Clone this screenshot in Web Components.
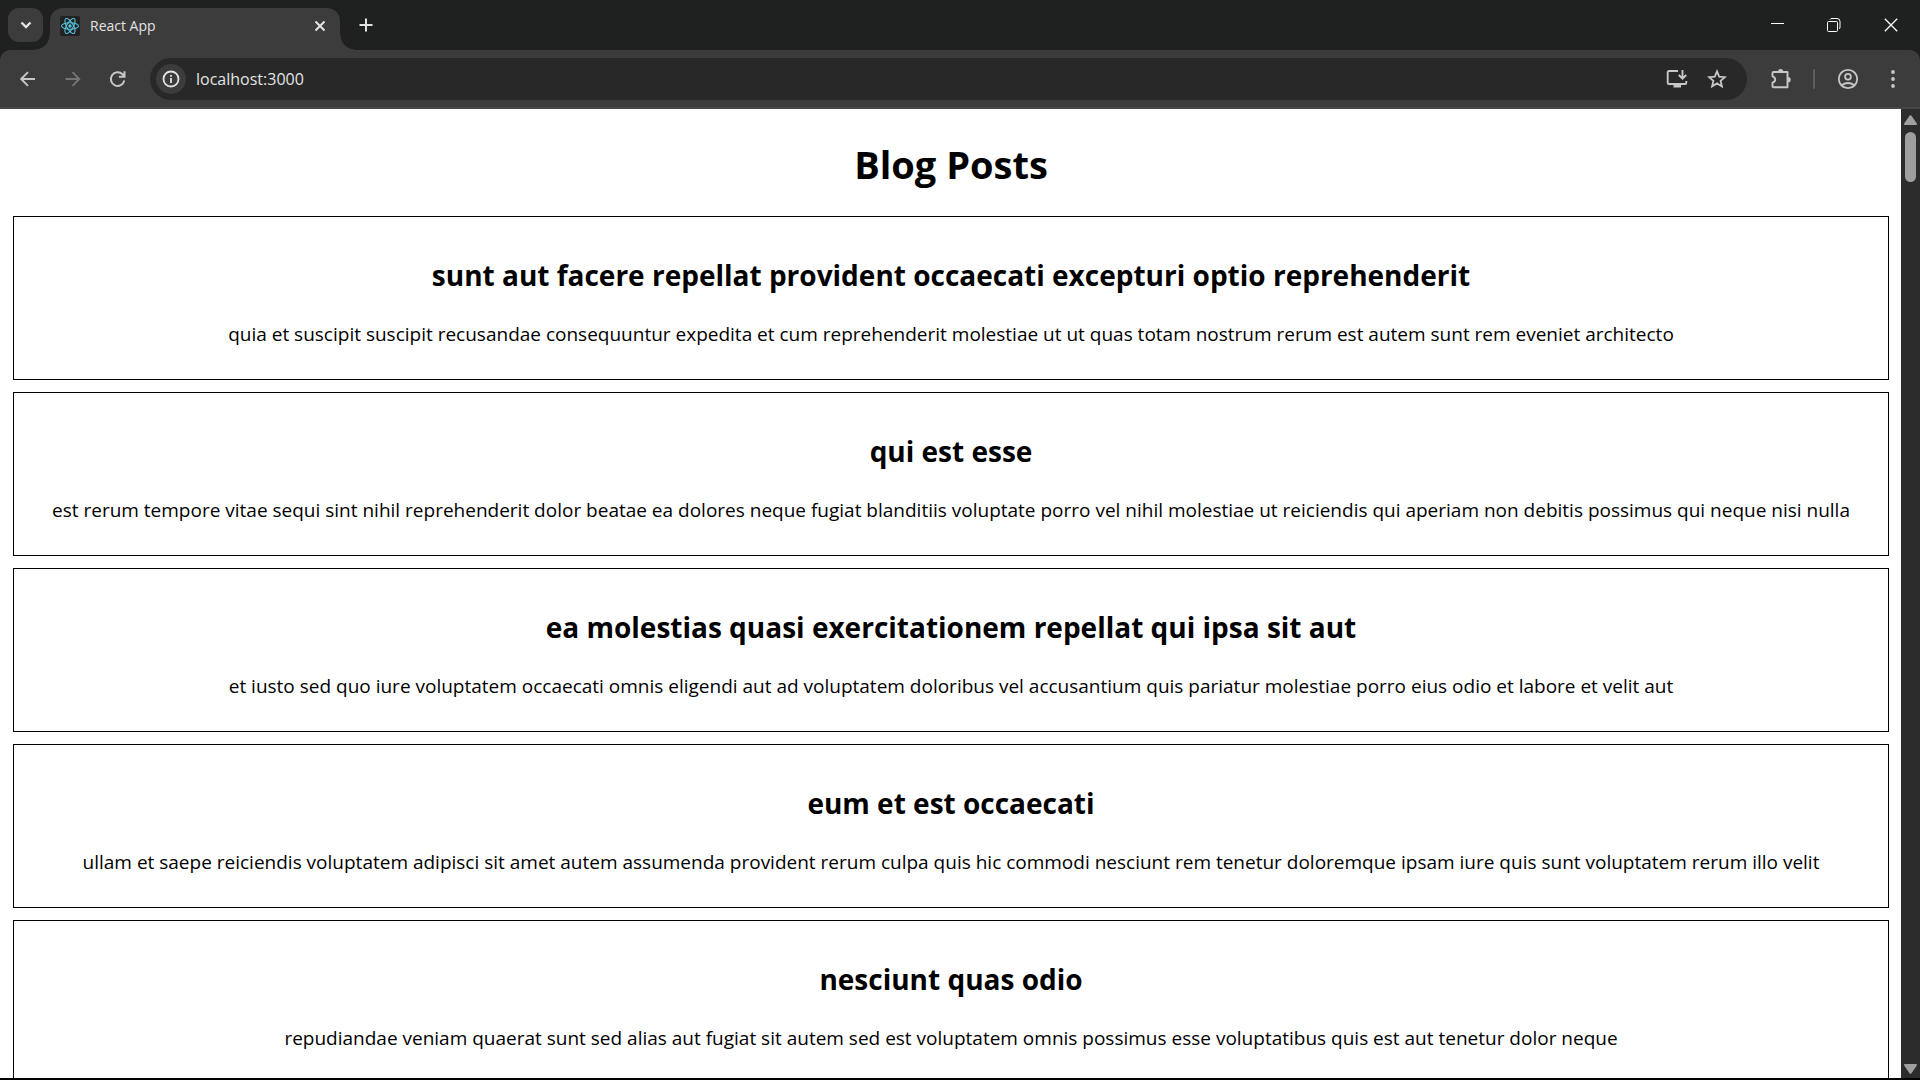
<!DOCTYPE html>
<html lang="en">
<head>
<meta charset="utf-8">
<title>React App</title>
<style>
  body { margin: 0; font-family: "Open Sans", "Noto Sans", sans-serif; background: #fff; }
</style>
</head>
<body>
<browser-window>
  <browser-tabs slot="tabs"><browser-tab>React App</browser-tab></browser-tabs>
  <browser-toolbar slot="toolbar" address="localhost:3000"></browser-toolbar>
  <blog-page heading="Blog Posts">
    <blog-post><span slot="title">sunt aut facere repellat provident occaecati excepturi optio reprehenderit</span>quia et suscipit suscipit recusandae consequuntur expedita et cum reprehenderit molestiae ut ut quas totam nostrum rerum est autem sunt rem eveniet architecto</blog-post>
    <blog-post><span slot="title">qui est esse</span>est rerum tempore vitae sequi sint nihil reprehenderit dolor beatae ea dolores neque fugiat blanditiis voluptate porro vel nihil molestiae ut reiciendis qui aperiam non debitis possimus qui neque nisi nulla</blog-post>
    <blog-post><span slot="title">ea molestias quasi exercitationem repellat qui ipsa sit aut</span>et iusto sed quo iure voluptatem occaecati omnis eligendi aut ad voluptatem doloribus vel accusantium quis pariatur molestiae porro eius odio et labore et velit aut</blog-post>
    <blog-post><span slot="title">eum et est occaecati</span>ullam et saepe reiciendis voluptatem adipisci sit amet autem assumenda provident rerum culpa quis hic commodi nesciunt rem tenetur doloremque ipsam iure quis sunt voluptatem rerum illo velit</blog-post>
    <blog-post><span slot="title">nesciunt quas odio</span>repudiandae veniam quaerat sunt sed alias aut fugiat sit autem sed est voluptatem omnis possimus esse voluptatibus quis est aut tenetur dolor neque</blog-post>
  </blog-page>
  <scroll-rail slot="rail"></scroll-rail>
</browser-window>

<script>
const define = (name, html, init) => {
  const template = document.createElement('template');
  template.innerHTML = html;
  customElements.define(name, class extends HTMLElement {
    constructor() {
      super();
      this.attachShadow({ mode: 'open' }).append(template.content.cloneNode(true));
    }
    connectedCallback() { if (init) init(this, this.shadowRoot); }
  });
};

const buttonReset = `
  *, *::before, *::after { box-sizing: border-box; }
  button { display: flex; align-items: center; justify-content: center; flex: none;
    margin: 0; padding: 0; border: 0; background: none; color: inherit; font: inherit; }
  svg { display: block; flex: none; fill: none; stroke: currentColor; stroke-width: 2; }
`;

/* Frame: tab strip, toolbar, page with its scroll rail */
define('browser-window', `
  <style>
    :host { display: flex; flex-direction: column; height: 100vh; overflow: hidden;
      background: #1f2120; border-bottom: 2px solid #000; box-sizing: border-box; }
    .view { display: flex; flex: 1; min-height: 0; background: #fff; }
    .page { flex: 1; min-width: 0; overflow: hidden; }
  </style>
  <slot name="tabs"></slot>
  <slot name="toolbar"></slot>
  <div class="view"><div class="page"><slot></slot></div><slot name="rail"></slot></div>
`);

define('browser-tabs', `
  <style>${buttonReset}
    :host { display: flex; flex: none; height: 50px; background: #1f2120; color: #e3e3e3; }
    .search { width: 35px; height: 34px; margin: 8px 7px 0 8px; border-radius: 11px; background: #3c3c3c; }
    .new { width: 34px; height: 34px; margin: 8px 0 0 9px; }
    .controls { display: flex; margin-left: auto; color: #fff; }
    .controls button { width: 57px; height: 49px; }
    .controls svg { stroke-width: 1; }
  </style>
  <button class="search" aria-label="Search tabs"><svg width="12" height="8" viewBox="0 0 12 8"><path d="M1.5 1.5 6 6l4.500-4.500" stroke-width="2.400"/></svg></button>
  <slot></slot>
  <button class="new" aria-label="New tab"><svg width="14" height="14" viewBox="0 0 14 14"><path d="M7 .5v13M.5 7h13"/></svg></button>
  <div class="controls">
    <button aria-label="Minimize"><svg width="13" height="13" viewBox="0 0 13 13"><path d="M0 5.500h13"/></svg></button>
    <button aria-label="Restore"><svg width="15" height="14" viewBox="0 0 15 14"><rect x=".5" y="3.500" width="10" height="10" rx="1"/><path d="M3 1.500Q3.500.5 5 .5h5q3 0 3 3V9q0 1.500-1 2"/></svg></button>
    <button aria-label="Close window"><svg width="15" height="14" viewBox="0 0 15 14"><path d="m.8.8 12.400 12.400M13.200.8.8 13.200" stroke-width="1.300"/></svg></button>
  </div>
`);

define('browser-tab', `
  <style>${buttonReset}
    :host { position: relative; display: flex; align-items: center; flex: none; width: 290px; height: 42px;
      box-sizing: border-box; margin-top: 8px; padding: 0 10px 7px; border-radius: 13px 13px 0 0;
      background: #3c3c3c; font-size: 14px; line-height: 20px; }
    :host::before, :host::after { content: ""; position: absolute; bottom: 0; width: 15px; height: 15px; }
    :host::before { right: 100%; background: radial-gradient(circle at 0 0, transparent 14px, #3c3c3c 15px); }
    :host::after { left: 100%; background: radial-gradient(circle at 100% 0, transparent 14px, #3c3c3c 15px); }
    .icon { margin-right: 10px; border-radius: 2px; background: #222; color: #58c4dc; }
    .title { flex: 1; }
    button { width: 20px; height: 20px; }
  </style>
  <svg class="icon" width="20" height="20" viewBox="0 0 20 20" stroke-width="1"><g style="stroke-width:1.1"><ellipse cx="10" cy="10" rx="8.500" ry="3.300"/><ellipse cx="10" cy="10" rx="8.500" ry="3.300" transform="rotate(60 10 10)"/><ellipse cx="10" cy="10" rx="8.500" ry="3.300" transform="rotate(120 10 10)"/></g><circle cx="10" cy="10" r="1.700" fill="currentColor" stroke="none"/></svg>
  <span class="title"><slot></slot></span>
  <button aria-label="Close tab"><svg width="12" height="12" viewBox="0 0 12 12"><path d="m1.500 1.500 9 9M10.500 1.500l-9 9"/></svg></button>
`);

define('browser-toolbar', `
  <style>${buttonReset}
    :host { display: block; flex: none; background: #1f2120; color: #c7c7c7; }
    .bar { display: flex; align-items: center; height: 59px; padding: 1px 5px 0 5px;
      border-radius: 10px 10px 0 0; border-bottom: 2px solid #474747; background: #3c3c3c; }
    button { width: 45px; height: 42px; }
    button:disabled { color: #757575; }
    form { display: flex; flex: 1; align-items: center; height: 42px; margin: 0 12px 0 10px; padding: 0 10px 0 6px;
      border-radius: 21px; background: #282828; }
    form button { width: 40px; height: 40px; }
    form .info { width: 30px; height: 30px; margin-right: 10px; border-radius: 50%; background: #3c3c3c; color: #e3e3e3; }
    input { flex: 1; min-width: 0; height: 30px; padding: 0; border: 0; outline: 0; background: none;
      color: #e3e3e3; font: inherit; font-size: 16px; }
    .extensions { width: 44px; }
    .rule { width: 2px; height: 20px; margin: 0 10px; border-radius: 1px; background: #5e5e5e; }
  </style>
  <div class="bar">
    <button aria-label="Back"><svg width="16" height="16" viewBox="0 0 16 16"><path d="M15 8H1.500M8 1.200 1.200 8 8 14.800" stroke-width="1.900"/></svg></button>
    <button aria-label="Forward" disabled><svg width="16" height="16" viewBox="0 0 16 16"><path d="M.5 8H14M7.500 1.200 14.300 8l-6.800 6.800" stroke-width="1.900"/></svg></button>
    <button aria-label="Reload"><svg width="18" height="18" viewBox="0 0 18 18"><path d="M15.300 10.500A6.800 6.800 0 1 1 13.500 4.300l2 2M15.500 1.200v5.600H9.900"/></svg></button>
    <form>
      <button class="info" type="button" aria-label="View site information"><svg width="18" height="18" viewBox="0 0 18 18"><circle cx="9" cy="9" r="7.500" stroke-width="1.800"/><path d="M9 8v5M9 5v1.800" stroke-width="1.800"/></svg></button>
      <input type="text" aria-label="Address" spellcheck="false">
      <button type="button" aria-label="Install app"><svg width="22" height="20" viewBox="0 0 22 20"><path d="M12 2H3q-1.300 0-1.300 1.300v10.400Q1.700 15 3 15h16q1.300 0 1.300-1.300V12M16.500 1v8M12.800 6l3.700 3.700L20.200 6" stroke-width="1.900"/><path d="M7.500 15h7.500v3.500H7.500z" fill="currentColor" stroke="none"/></svg></button>
      <button type="button" aria-label="Bookmark this page"><svg width="20" height="20" viewBox="0 0 20 20"><path d="m10 2.400 2.200 5.200 5.700.5-4.300 3.700 1.300 5.600L10 14.400l-4.900 3 1.300-5.600-4.300-3.700 5.700-.5z" stroke-width="1.800"/></svg></button>
    </form>
    <button class="extensions" aria-label="Extensions"><svg width="22" height="22" viewBox="0 0 22 22"><path d="M3.500 4h14v15.300h-14q-1 0-1-1v-3.600q2.700-.8 2.700-3.100T2.500 8.400V5q0-1 1-1z" stroke-width="1.900" stroke-linejoin="round"/><path d="M8 3.500a2.600 2.600 0 0 1 5.200 0zM18 9a2.700 2.700 0 0 1 0 5.400z" fill="currentColor" stroke="none"/></svg></button>
    <span class="rule"></span>
    <button aria-label="Profile"><svg width="22" height="22" viewBox="0 0 22 22"><circle cx="11" cy="11" r="9.200" stroke-width="1.800"/><circle cx="11" cy="8.800" r="2.900" stroke-width="1.800"/><path d="M4.800 17q6.200-4 12.400 0" stroke-width="1.800"/></svg></button>
    <button aria-label="Menu"><svg width="4" height="18" viewBox="0 0 4 18"><g fill="currentColor" stroke="none"><circle cx="2" cy="2" r="1.900"/><circle cx="2" cy="9" r="1.900"/><circle cx="2" cy="16" r="1.900"/></g></svg></button>
  </div>
`, (host, root) => { root.querySelector('input').value = host.getAttribute('address'); });

define('scroll-rail', `
  <style>
    :host { display: flex; flex-direction: column; align-items: center; flex: none; width: 19px;
      box-sizing: border-box; padding: 6px 0 4px; background: #2c2c2c; }
    svg { display: block; fill: #9f9f9f; stroke: #9f9f9f; stroke-width: 2; stroke-linejoin: round; }
    .thumb { width: 11px; height: 50px; margin-top: 7px; border-radius: 6px; background: #9f9f9f; }
    .down { margin-top: auto; }
  </style>
  <svg width="13" height="10" viewBox="0 0 13 10"><path d="M6.500 1.200 12 9H1z"/></svg>
  <div class="thumb"></div>
  <svg class="down" width="13" height="10" viewBox="0 0 13 10"><path d="M6.500 8.800 12 1H1z"/></svg>
`);

define('blog-page', `
  <style>
    :host { display: block; padding: 0 12px 0 13px; text-align: center; color: #000; }
    h1 { margin: 0; padding: 29px 0 26px; font-size: 38px; line-height: 52px; }
    .posts { display: flex; flex-direction: column; gap: 12px; }
  </style>
  <h1></h1>
  <div class="posts"><slot></slot></div>
`, (host, root) => { root.querySelector('h1').textContent = host.getAttribute('heading'); });

define('blog-post', `
  <style>
    :host { display: block; padding: 13px; border: 1px solid #000; }
    h2 { margin: 25px 0; font-size: 28px; line-height: 40px; }
    p { margin: 27px 0 19px; font-size: 19px; line-height: 25px; }
  </style>
  <article><h2><slot name="title"></slot></h2><p><slot></slot></p></article>
`);
</script>
</body>
</html>
